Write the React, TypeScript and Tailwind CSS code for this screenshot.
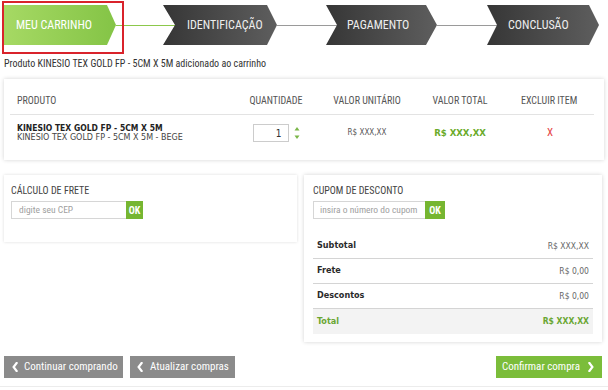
const RC = "font-['Roboto_Condensed','Roboto',sans-serif]";
const DC = "font-['DejaVu_Sans_Condensed','DejaVu_Sans',sans-serif]";
const DV = "font-['DejaVu_Sans','Verdana',sans-serif]";

function Chevron({ dir }: { dir: "left" | "right" }) {
  return (
    <svg width="6" height="10" viewBox="0 0 6 10" className="shrink-0">
      {dir === "left" ? (
        <polyline points="4.6,1 1.6,5 4.6,9" fill="none" stroke="white" strokeWidth="2.2" strokeLinecap="square" />
      ) : (
        <polyline points="1.4,1 4.4,5 1.4,9" fill="none" stroke="white" strokeWidth="2.2" strokeLinecap="square" />
      )}
    </svg>
  );
}

function Steps() {
  return (
    <div className="relative h-[54px]">
      <div className="flex items-center pt-[5px] pl-[4px]">
        <div className={`flex h-[40px] w-[112px] shrink-0 items-center pl-[12px] bg-[linear-gradient(to_right,#a6d964,#84c446)] [clip-path:polygon(0_0,calc(100%_-_9px)_0,100%_50%,calc(100%_-_9px)_100%,0_100%)] text-[12px] text-white ${RC}`}>
          MEU CARRINHO
        </div>
        <div className="h-px w-[59px] shrink-0 bg-[#8cc84b]" />
        <div className={`ml-[-12px] flex h-[40px] w-[114px] shrink-0 items-center pl-[24px] bg-[linear-gradient(to_right,#363636,#5e5e5e)] [clip-path:polygon(0_0,calc(100%_-_10px)_0,100%_50%,calc(100%_-_10px)_100%,0_100%,12px_50%)] text-[12px] text-[#eeeeee] ${RC}`}>
          IDENTIFICAÇÃO
        </div>
        <div className="h-px w-[60px] shrink-0 bg-[#9a9a9a]" />
        <div className={`ml-[-11px] flex h-[40px] w-[111px] shrink-0 items-center pl-[21px] bg-[linear-gradient(to_right,#363636,#5e5e5e)] [clip-path:polygon(0_0,calc(100%_-_11px)_0,100%_50%,calc(100%_-_11px)_100%,0_100%,11px_50%)] text-[12px] text-[#eeeeee] ${RC}`}>
          PAGAMENTO
        </div>
        <div className="h-px w-[60px] shrink-0 bg-[#9a9a9a]" />
        <div className={`ml-[-10px] flex h-[40px] w-[112px] shrink-0 items-center pl-[21px] bg-[linear-gradient(to_right,#363636,#5e5e5e)] [clip-path:polygon(0_0,calc(100%_-_10px)_0,100%_50%,calc(100%_-_10px)_100%,0_100%,10px_50%)] text-[12px] text-[#eeeeee] ${RC}`}>
          CONCLUSÃO
        </div>
      </div>
      <div className="absolute left-[2px] top-[1px] h-[53px] w-[122px] border-2 border-[#d9232b]" />
    </div>
  );
}

function QtyArrows() {
  return (
    <svg width="6" height="14" viewBox="0 0 6 14" className="shrink-0">
      <polygon points="0.5,4.5 3,1 5.5,4.5" fill="#7ab648" />
      <polygon points="0.5,9.5 5.5,9.5 3,13" fill="#7ab648" />
    </svg>
  );
}

function CartTable() {
  return (
    <div className="ml-[4px] w-[600px] bg-white pl-[6px] pr-[10px] pt-[14px] shadow-[0_0_4px_rgba(0,0,0,0.18)]">
      <div className={`grid h-[22px] grid-cols-[230px_72px_110px_76px_96px] items-start border-b border-[#e3e3e3] text-[10px] leading-[16px] text-[#555555] ${RC}`}>
        <div className="pl-[7px]">PRODUTO</div>
        <div className="text-center">QUANTIDADE</div>
        <div className="text-center">VALOR UNITÁRIO</div>
        <div className="text-center">VALOR TOTAL</div>
        <div className="pl-[23px]">EXCLUIR ITEM</div>
      </div>
      <div className="grid grid-cols-[230px_72px_110px_76px_96px] items-center pb-[17px] pt-[8px]">
        <div className="pl-[7px]">
          <div className={`whitespace-nowrap text-[8.5px] font-bold leading-[10px] text-[#222222] ${DC}`}>KINESIO TEX GOLD FP - 5CM X 5M</div>
          <div className={`whitespace-nowrap text-[8px] leading-[10px] text-[#444444] ${DV}`}>KINESIO TEX GOLD FP - 5CM X 5M - BEGE</div>
        </div>
        <div className="flex items-center justify-center gap-[5px]">
          <div className={`flex h-[18px] w-[36px] items-center justify-end border border-[#cccccc] bg-white pr-[6px] text-[10px] text-[#333333] ${DC}`}>
            1
          </div>
          <QtyArrows />
        </div>
        <div className={`text-center text-[8px] text-[#555555] ${DC}`}>R$ XXX,XX</div>
        <div className={`text-center text-[9.5px] font-bold text-[#6aab2a] ${DC}`}>R$ XXX,XX</div>
        <div className={`pl-[49px] text-[11px] text-[#e54545] ${RC}`}>X</div>
      </div>
    </div>
  );
}

function InputOk({ placeholder, width, btn, pl }: { placeholder: string; width: string; btn: string; pl: string }) {
  return (
    <div className="flex h-[18px]">
      <div className={`flex h-full items-center border border-r-0 border-[#d6d6d6] bg-white ${width} ${pl} text-[9.5px] text-[#a0a0a0] ${RC}`}>
        {placeholder}
      </div>
      <div className={`flex h-full ${btn} items-center justify-center bg-[#76b631] text-[10px] font-bold text-white ${RC}`}>OK</div>
    </div>
  );
}

function SumRow({ label, value, last }: { label: string; value: string; last?: boolean }) {
  if (last) {
    return (
      <div className={`flex h-[25px] items-center justify-between bg-[#f3f3f3] px-[4px] font-bold text-[#6aa632] ${DC}`}>
        <span className="text-[9px]">{label}</span>
        <span className="text-[8.5px]">{value}</span>
      </div>
    );
  }
  return (
    <div className={`flex h-[25px] items-center justify-between border-b border-[#d4d4d4] px-[4px] ${DC}`}>
      <span className="text-[9px] font-bold text-[#2a2a2a]">{label}</span>
      <span className="text-[8.5px] text-[#666666]">{value}</span>
    </div>
  );
}

function Panels() {
  return (
    <div className="ml-[4px] mt-[15px] flex items-start gap-[7px]">
      <div className="w-[293px] shrink-0 bg-white pb-[23px] pl-[7px] pt-[10px] shadow-[0_0_3px_rgba(0,0,0,0.14)]">
        <div className={`text-[10px] leading-[12px] text-[#444444] ${RC}`}>CÁLCULO DE FRETE</div>
        <div className="mt-[4px]">
          <InputOk placeholder="digite seu CEP" width="w-[115px]" btn="w-[17px]" pl="pl-[7px]" />
        </div>
      </div>
      <div className="w-[298px] shrink-0 bg-white pb-[8px] pl-[9px] pr-[9px] pt-[10px] shadow-[0_0_4px_rgba(0,0,0,0.18)]">
        <div className={`text-[10px] leading-[12px] text-[#444444] ${RC}`}>CUPOM DE DESCONTO</div>
        <div className="mt-[4px]">
          <InputOk placeholder="insira o número do cupom" width="w-[112px]" btn="w-[20px]" pl="pl-[6px]" />
        </div>
        <div className="mt-[15px]">
          <SumRow label="Subtotal" value="R$ XXX,XX" />
          <SumRow label="Frete" value="R$ 0,00" />
          <SumRow label="Descontos" value="R$ 0,00" />
          <SumRow label="Total" value="R$ XXX,XX" last />
        </div>
      </div>
    </div>
  );
}

function Buttons() {
  return (
    <div className={`mt-[14px] flex items-center whitespace-nowrap px-[4px] text-[11px] text-white ${RC}`}>
      <div className="flex h-[22px] w-[119px] items-center gap-[6px] bg-[#8b8b8b] pl-[8px]">
        <Chevron dir="left" />
        <span>Continuar comprando</span>
      </div>
      <div className="ml-[7px] flex h-[22px] w-[105px] items-center gap-[7px] bg-[#8b8b8b] pl-[7px]">
        <Chevron dir="left" />
        <span>Atualizar compras</span>
      </div>
      <div className="ml-auto mr-[2px] flex h-[22px] w-[106px] items-center gap-[8px] bg-[#7bbd3a] pl-[6px]">
        <span>Confirmar compra</span>
        <Chevron dir="right" />
      </div>
    </div>
  );
}

export default function App() {
  return (
    <div className="h-[390px] w-[608px] overflow-hidden bg-white">
      <Steps />
      <div className={`mt-[4px] pl-[4px] text-[10px] leading-[12px] text-[#333333] ${RC}`}>
        Produto KINESIO TEX GOLD FP - 5CM X 5M adicionado ao carrinho
      </div>
      <div className="mt-[9px]">
        <CartTable />
      </div>
      <Panels />
      <Buttons />
      <div className="mt-[8px] h-px w-full bg-[#ececec]" />
    </div>
  );
}
